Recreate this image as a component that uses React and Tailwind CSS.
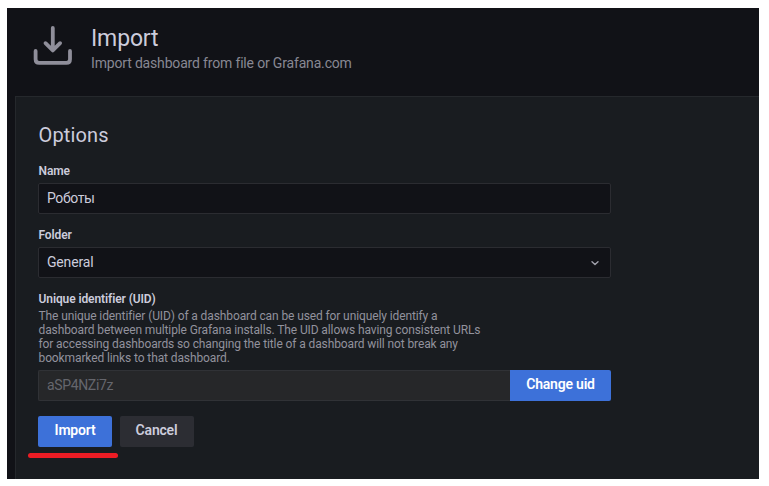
function ImportIcon() {
  return (
    <svg className="h-10 w-10 shrink-0" viewBox="0 0 40 40" fill="none" stroke="#8f8e9a" strokeWidth="3.8" strokeLinecap="round" strokeLinejoin="round">
      <path d="M2.6 26V34.2Q2.6 37.8 6.2 37.8H33.4Q37 37.8 37 34.2V26" />
      <path d="M19.8 2.9V25M12.5 18.2L19.8 25.4L27.1 18.2" />
    </svg>
  );
}

function Label({ children }) {
  return <div className="h-4 pl-[0.5px] text-[12px] leading-[17px] font-semibold tracking-[-0.1px] text-[#ccccdc]">{children}</div>;
}

const description = [
  'The unique identifier (UID) of a dashboard can be used for uniquely identify a',
  'dashboard between multiple Grafana installs. The UID allows having consistent URLs',
  'for accessing dashboards so changing the title of a dashboard will not break any',
  'bookmarked links to that dashboard.',
];

export default function App() {
  return (
    <div className="h-[486px] w-[769px] overflow-hidden bg-white pt-2 pl-[7px] font-['Roboto',sans-serif] text-[14px] text-[#ccccdc]">
      <div className="flex h-[471px] w-[752px] flex-col bg-[#111217] pl-2">
        <header className="flex h-[88px] shrink-0 pt-[17px] pl-[18px]">
          <ImportIcon />
          <div className="pl-[18px]">
            <h1 className="h-7 text-[23px] leading-[28px] tracking-[-0.15px]">Import</h1>
            <div className="pt-px leading-[18px] tracking-[-0.17px] text-[#888893]">Import dashboard from file or Grafana.com</div>
          </div>
        </header>

        <main className="flex-1 border-t border-l border-[#25282c] bg-[#191c20] pt-[26px] pl-[22px]">
          <div className="w-[573px]">
            <h2 className="h-6 pl-[0.5px] text-[20px] leading-6 tracking-[0.15px]">Options</h2>
            <div className="pt-4">
              <Label>Name</Label>
              <div className="mt-1 flex h-[31px] items-center rounded-xs border border-[#2b2c31] bg-[#111217] px-2 tracking-[-0.4px]">Роботы</div>
            </div>
            <div className="pt-[13px]">
              <Label>Folder</Label>
              <div className="mt-1 flex h-[31px] items-center justify-between rounded-xs border border-[#2b2c31] bg-[#111217] pr-[9px] pl-2 tracking-[-0.17px]">
                <span>General</span>
                <svg className="mt-px h-3 w-3" viewBox="0 0 12 12" fill="none" stroke="#a1a1ac" strokeWidth="1.4" strokeLinecap="round" strokeLinejoin="round">
                  <path d="M3 4.7L6 7.5L9 4.7" />
                </svg>
              </div>
            </div>
            <div className="pt-[13px]">
              <Label>Unique identifier (UID)</Label>
              <div className="h-[59px] pt-[1.5px] pl-[0.5px] text-[12px] leading-[14.3px] tracking-[-0.11px] whitespace-nowrap text-[#92929d]">
                {description.map((line) => (
                  <div key={line}>{line}</div>
                ))}
              </div>
              <div className="mt-1 flex h-[31px]">
                <div className="flex flex-1 items-center rounded-l-xs border border-r-0 border-[#303236] bg-[#262729] px-2 tracking-[-0.35px] text-[#65666d]">aSP4NZi7z</div>
                <button className="w-[101px] rounded-r-xs bg-[#3d71d9] pb-0.5 font-semibold tracking-[-0.2px] text-white">Change uid</button>
              </div>
            </div>
            <div className="flex gap-2 pt-[15px]">
              <div className="relative">
                <button className="h-[31px] w-[74px] rounded-xs bg-[#3d71d9] pb-0.5 font-semibold tracking-[-0.2px] text-white">Import</button>
                <div className="absolute top-[37px] -left-[10px] h-[5px] w-[90px] rounded-full bg-[#ec1c24]" />
              </div>
              <button className="h-[31px] w-[74px] rounded-xs bg-[#2c2d33] pr-px pb-0.5 font-semibold tracking-[-0.2px]">Cancel</button>
            </div>
          </div>
        </main>
      </div>
    </div>
  );
}
